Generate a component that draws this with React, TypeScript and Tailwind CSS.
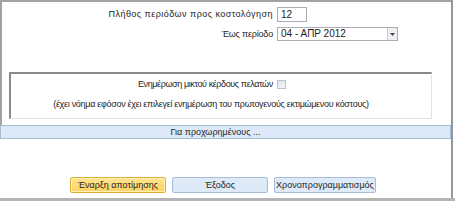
import React from "react";

export default function App() {
  return (
    <div className="w-[455px] h-[201px] bg-white overflow-hidden text-[9px] text-[#1e1e1e]" style={{ fontFamily: "'Liberation Sans', Arial, sans-serif" }}>
      <div className="w-[453px] h-[198px] border-r-2 border-[#8f98a3] flex flex-col">
        {/* top section */}
        <div className="h-[125px] border-t-2 border-l-2 border-[#a3a3a3] flex flex-col">
          <div className="flex items-center pt-[5px]">
            <div className="w-[271px] shrink-0 text-right leading-[15px] h-[15px] tracking-[0.45px]">Πλήθος περιόδων προς κοστολόγηση</div>
            <div className="ml-[4px] w-[30px] h-[15px] border border-[#abadb3] bg-white px-[3px] leading-[13px] text-[10px]">12</div>
          </div>
          <div className="flex items-center mt-[5px]">
            <div className="w-[271px] shrink-0 text-right leading-[14px] h-[14px] tracking-[-0.2px]">Έως περίοδο</div>
            <div className="ml-[4px] w-[121px] h-[14px] border border-[#abadb3] bg-white flex">
              <div className="flex-1 px-[3px] leading-[12px] text-[10px]">04 - ΑΠΡ 2012</div>
              <div className="w-[10px] h-full border-l border-[#c5c9d0] bg-[#eef0f3] flex items-center justify-center">
                <svg width="5" height="3" viewBox="0 0 5 3"><path d="M0 0h5L2.5 3z" fill="#444" /></svg>
              </div>
            </div>
          </div>
          <div className="ml-[7px] mt-[31px] w-[423px] h-[47px] border-t-2 border-l-2 border-[#8a8a8a] border-r border-b border-r-[#e3e3e3] border-b-[#e3e3e3] flex flex-col">
            <div className="flex items-center gap-[4px] mt-[5px] h-[11px] pl-[127px]">
              <span className="leading-[11px] tracking-[-0.4px]">Ενημέρωση μικτού κέρδους πελατών</span>
              <span className="w-[9px] h-[9px] border border-[#b8c4d4] bg-gradient-to-br from-[#dfe6ef] to-[#f5f7fa]" />
            </div>
            <div className="mt-[9px] leading-[11px] text-center pr-[20px] tracking-[-0.3px] whitespace-nowrap">(έχει νόημα εφόσον έχει επιλεγεί ενημέρωση του πρωτογενούς εκτιμώμενου κόστους)</div>
          </div>
        </div>
        {/* advanced bar */}
        <div className="h-[14px] border border-[#a9bcd3] bg-[#dde9f8] flex items-center justify-center leading-[12px] pr-[20px]">
          Για προχωρημένους ...
        </div>
        {/* buttons */}
        <div className="flex-1 flex items-start pt-[38px] pl-[70px] gap-[6px]">
          <div className="w-[96px] h-[16px] rounded-[2px] border border-[#dcae3a] bg-gradient-to-b from-[#ffe491] to-[#fdd35f] flex items-center justify-center leading-[12px] whitespace-nowrap shadow-[inset_0_0_0_1px_#fff0b8]">
            Έναρξη αποτίμησης
          </div>
          <div className="w-[96px] h-[16px] rounded-[2px] border border-[#a9bcd6] bg-[#dfeaf8] flex items-center justify-center leading-[12px] whitespace-nowrap">
            Έξοδος
          </div>
          <div className="w-[102px] h-[16px] rounded-[2px] border border-[#a9bcd6] bg-[#dfeaf8] flex items-center justify-center leading-[12px] whitespace-nowrap">
            Χρονοπρογραμματισμός
          </div>
        </div>
      </div>
      <div className="h-[3px] bg-[#b5b5b5]" />
    </div>
  );
}
